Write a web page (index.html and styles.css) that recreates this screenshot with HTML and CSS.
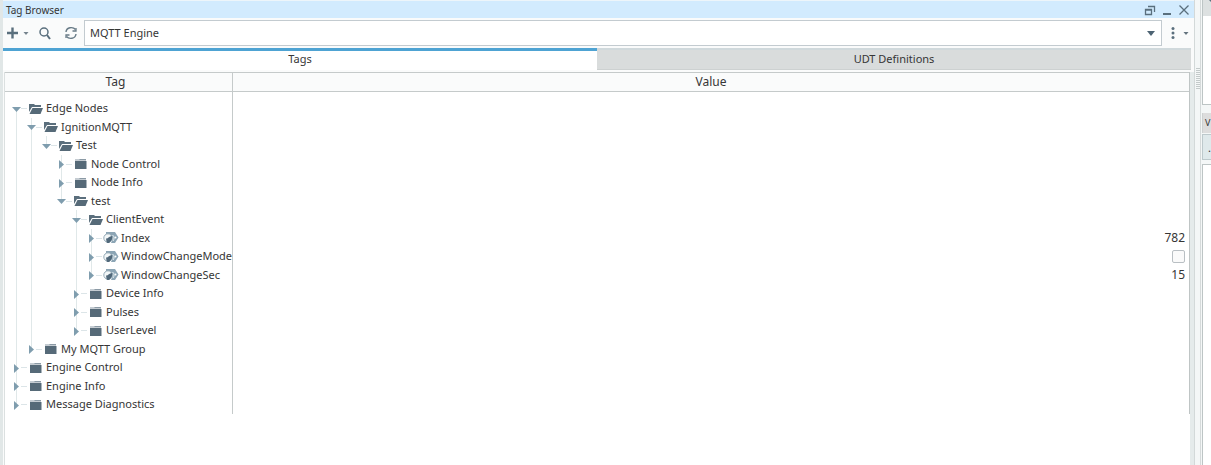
FILE: index.html
```html
<!DOCTYPE html>
<html lang="en">
<head>
<meta charset="utf-8">
<title>Tag Browser</title>
<link rel="stylesheet" href="styles.css">
</head>
<body>
<svg class="defs" aria-hidden="true">
  <symbol id="open" viewBox="0 0 16 12"><path d="M1 9V1h5l1 1h6v2H4L1 9z" fill="#5b6f7d"/><path d="M4.500 5H15l-2.500 6H1.500z" fill="#566a78"/></symbol>
  <symbol id="closed" viewBox="0 0 16 12"><path d="M2 2.500V1.500h4L7 1h6v1.500z" fill="#8b9aa5"/><path d="M2 3h11.500v8H2z" fill="#566a78"/></symbol>
  <symbol id="tag" viewBox="0 0 16 12"><path d="M3 0h9l3.500 5.500L12 11H8l2-5-3-3H3z" fill="#8ca5b5"/><path d="M9.500 3c2 1.500 2 4 .5 6" fill="none" stroke="#e9f1f4"/><circle cx="12.500" cy="5.500" r="1" fill="#fff"/><circle cx="5" cy="6" r="4.200" fill="#f3f7f8" stroke="#93a9b6"/><path d="M3 6.500C5 7 6 4 9 4c.8 2 0 4-1.500 5.500C6 12 3 11 3.500 9.500z" fill="#50687a"/></symbol>
  <symbol id="down" viewBox="0 0 10 10"><path d="M1 3h9L5.500 8z" fill="#7f9dae"/></symbol>
  <symbol id="right" viewBox="0 0 10 10"><path d="M3 1v9l5-4.500z" fill="#7f9dae"/></symbol>
</svg>
<div class="workspace">
  <main class="browser">
    <header class="titlebar">
      <h1>Tag Browser</h1>
      <button aria-label="Float"><svg width="12" height="12"><path d="M1.500 5.500h6v5h-6zM1 6h7M4 2.500h6.500V8" fill="none" stroke="#5a6f7d" stroke-width="1.300"/></svg></button>
      <button aria-label="Minimize"><svg width="12" height="12"><path d="M2 10h8" stroke="#5a6f7d" stroke-width="2"/></svg></button>
      <button aria-label="Close"><svg width="12" height="12"><path d="M1.500 1.500l9 9m0-9l-9 9" stroke="#5a6f7d" stroke-width="1.300"/></svg></button>
    </header>
    <div class="toolbar">
      <button class="add" aria-label="Add"><svg width="24" height="14"><path d="M1 7h11M6.500 1.500v11" stroke="#5a6f7d" stroke-width="2.400"/><path d="M17.500 6h5L20 9z" fill="#75838d"/></svg></button>
      <button class="find" aria-label="Search"><svg width="14" height="14"><circle cx="6" cy="6" r="4" fill="none" stroke="#5a6f7d" stroke-width="1.500"/><path d="M9 9l3 4" stroke="#5a6f7d" stroke-width="2"/></svg></button>
      <button class="refresh" aria-label="Refresh"><svg width="14" height="14"><path d="M2 6c.5-5 7-5.500 9.500-2.500M12 8c-.5 5-7 5.500-9.500 2.500" fill="none" stroke="#687b87" stroke-width="1.400"/><path d="M12 2v3H8.500M2 12V9h3.500" fill="none" stroke="#687b87" stroke-width="1.300"/></svg></button>
      <div class="provider">
        <select aria-label="Tag provider"><option>MQTT Engine</option></select>
        <svg width="10" height="8"><path d="M1 2h8L5 7z" fill="#4d6373"/></svg>
      </div>
      <button class="more" aria-label="More"><svg width="20" height="14"><g fill="#5a6f7d"><circle cx="3" cy="2.500" r="1.500"/><circle cx="3" cy="7" r="1.500"/><circle cx="3" cy="11.500" r="1.500"/></g><path d="M13.500 6h5L16 9z" fill="#63737e"/></svg></button>
    </div>
    <div class="tabs" role="tablist">
      <button class="tab active" role="tab" aria-selected="true">Tags</button>
      <button class="tab" role="tab" aria-selected="false">UDT Definitions</button>
    </div>
    <div class="content">
      <table>
        <thead><tr><th class="tagcol">Tag</th><th>Value</th></tr></thead>
        <tbody>
          <tr class="gap"><td></td><td></td></tr>
          <tr><td><div class="node"><button class="from" aria-label="Collapse"><svg><use href="#down"/></svg></button><svg class="icon"><use href="#open"/></svg>Edge Nodes</div></td><td></td></tr>
          <tr><td><div class="node"><i class="line"></i><button class="line" aria-label="Collapse"><svg><use href="#down"/></svg></button><svg class="icon"><use href="#open"/></svg>IgnitionMQTT</div></td><td></td></tr>
          <tr><td><div class="node"><i class="line"></i><i class="line"></i><button class="end" aria-label="Collapse"><svg><use href="#down"/></svg></button><svg class="icon"><use href="#open"/></svg>Test</div></td><td></td></tr>
          <tr><td><div class="node"><i class="line"></i><i class="line"></i><i></i><button class="line" aria-label="Expand"><svg><use href="#right"/></svg></button><svg class="icon"><use href="#closed"/></svg>Node Control</div></td><td></td></tr>
          <tr><td><div class="node"><i class="line"></i><i class="line"></i><i></i><button class="line" aria-label="Expand"><svg><use href="#right"/></svg></button><svg class="icon"><use href="#closed"/></svg>Node Info</div></td><td></td></tr>
          <tr><td><div class="node"><i class="line"></i><i class="line"></i><i></i><button class="end" aria-label="Collapse"><svg><use href="#down"/></svg></button><svg class="icon"><use href="#open"/></svg>test</div></td><td></td></tr>
          <tr><td><div class="node"><i class="line"></i><i class="line"></i><i></i><i></i><button class="line" aria-label="Collapse"><svg><use href="#down"/></svg></button><svg class="icon"><use href="#open"/></svg>ClientEvent</div></td><td></td></tr>
          <tr><td><div class="node"><i class="line"></i><i class="line"></i><i></i><i></i><i class="line"></i><button class="line" aria-label="Expand"><svg><use href="#right"/></svg></button><svg class="icon"><use href="#tag"/></svg>Index</div></td><td>782</td></tr>
          <tr><td><div class="node"><i class="line"></i><i class="line"></i><i></i><i></i><i class="line"></i><button class="line" aria-label="Expand"><svg><use href="#right"/></svg></button><svg class="icon"><use href="#tag"/></svg><label for="mode">WindowChangeMode</label></div></td><td><input type="checkbox" id="mode"></td></tr>
          <tr><td><div class="node"><i class="line"></i><i class="line"></i><i></i><i></i><i class="line"></i><button class="end" aria-label="Expand"><svg><use href="#right"/></svg></button><svg class="icon"><use href="#tag"/></svg>WindowChangeSec</div></td><td>15</td></tr>
          <tr><td><div class="node"><i class="line"></i><i class="line"></i><i></i><i></i><button class="line" aria-label="Expand"><svg><use href="#right"/></svg></button><svg class="icon"><use href="#closed"/></svg>Device Info</div></td><td></td></tr>
          <tr><td><div class="node"><i class="line"></i><i class="line"></i><i></i><i></i><button class="line" aria-label="Expand"><svg><use href="#right"/></svg></button><svg class="icon"><use href="#closed"/></svg>Pulses</div></td><td></td></tr>
          <tr><td><div class="node"><i class="line"></i><i class="line"></i><i></i><i></i><button class="end" aria-label="Expand"><svg><use href="#right"/></svg></button><svg class="icon"><use href="#closed"/></svg>UserLevel</div></td><td></td></tr>
          <tr><td><div class="node"><i class="line"></i><button class="end" aria-label="Expand"><svg><use href="#right"/></svg></button><svg class="icon"><use href="#closed"/></svg>My MQTT Group</div></td><td></td></tr>
          <tr><td><div class="node"><button class="line" aria-label="Expand"><svg><use href="#right"/></svg></button><svg class="icon"><use href="#closed"/></svg>Engine Control</div></td><td></td></tr>
          <tr><td><div class="node"><button class="line" aria-label="Expand"><svg><use href="#right"/></svg></button><svg class="icon"><use href="#closed"/></svg>Engine Info</div></td><td></td></tr>
          <tr><td><div class="node"><button class="end" aria-label="Expand"><svg><use href="#right"/></svg></button><svg class="icon"><use href="#closed"/></svg>Message Diagnostics</div></td><td></td></tr>
        </tbody>
      </table>
    </div>
  </main>
  <div class="splitter"><span class="grip"></span></div>
  <aside class="side">
    <section class="top"><div class="strip"><svg width="8" height="6"><path d="M0 0h8L4 4z" fill="#5a6f7d"/></svg></div></section>
    <h2>V</h2>
    <div class="sidetool">.</div>
    <section class="bottom"></section>
  </aside>
</div>
</body>
</html>
```

FILE: styles.css
```css
* { box-sizing: border-box; }

body {
  margin: 0;
  font: 11px/18px "Noto Sans", sans-serif;
  color: #363636;
  background: #f4f7f7;
  overflow: hidden;
}

button {
  display: flex;
  align-items: center;
  justify-content: center;
  padding: 0;
  border: 0;
  background: none;
  font: inherit;
  color: inherit;
}

.defs { display: none; }
.workspace { display: flex; height: 100vh; }

.browser {
  flex: 1;
  min-width: 0;
  display: flex;
  flex-direction: column;
  border-left: 3px solid #e1e7e7;
  border-right: 1px solid #d3d9d9;
  background: #fafbfb;
}

.titlebar {
  display: flex;
  align-items: center;
  gap: 5px;
  height: 18px;
  padding: 0 4px 0 3px;
  border-top: 1px solid #edf5fa;
  background: #d2ebfe;
}
.titlebar h1 { flex: 1; margin: 0; font-size: 10px; line-height: 16px; font-weight: 400; }

.toolbar {
  display: flex;
  align-items: center;
  height: 30px;
  padding: 2px 4px 2px 3px;
}
.find { margin-left: 8px; }
.refresh { margin: 0 6px 0 12px; }
.more { margin-left: 8px; }

.provider { flex: 1; display: grid; align-items: center; height: 26px; }
.provider select {
  grid-area: 1 / 1;
  width: 100%;
  height: 100%;
  padding: 0 5px;
  appearance: none;
  border: 1px solid #c3cbd0;
  border-radius: 0;
  background: #fff;
  font: inherit;
  color: inherit;
}
.provider svg {
  grid-area: 1 / 1;
  justify-self: end;
  margin-right: 6px;
  pointer-events: none;
}

.tabs { display: flex; height: 24px; padding: 0 3px 2px 0; }
.tab {
  flex: 1;
  padding-bottom: 2px;
  border-top: 2px solid #d0d9dc;
  border-bottom: 1px solid #cdd1d1;
  background: #d9dcdc;
}
.tab.active { padding-bottom: 4px; border-top: 3px solid #4ea3d3; border-bottom: 0; background: #fff; }

.content {
  flex: 1;
  margin-left: 1px;
  border-left: 1px solid #dbe0e0;
  border-right: 4px solid #e5ebeb;
  background: #fff;
}

table {
  width: 100%;
  table-layout: fixed;
  border-collapse: separate;
  border-spacing: 0;
  border-right: 1px solid #bfc5c5;
}
th {
  height: 20px;
  padding: 0;
  border: solid #c5caca;
  border-width: 1px 0;
  background: #fafbfb;
  font-size: 12px;
  font-weight: 400;
  line-height: 16px;
}
th.tagcol { width: 228px; padding-right: 6px; }
th:first-child, td:first-child { border-right: 1px solid #c5caca; }
tbody tr { height: 19px; }
tbody tr:nth-child(odd) { height: 18px; }
tbody tr.gap { height: 7px; }
td { height: inherit; padding: 0; line-height: 18px; }
td:last-child { padding-right: 4px; font-size: 12px; text-align: right; }

.node { display: flex; height: 100%; padding-left: 4px; white-space: nowrap; }
.node i, .node button { flex: none; width: 15px; }
.node button { width: 18px; justify-content: flex-start; padding-left: 2px; }
.node button svg { width: 10px; height: 10px; }
.node .line, .node .end, .node .from {
  background: linear-gradient(#e0e8e9, #e0e8e9) 7px 0 / 1px 100% no-repeat;
}
.node .end { background-size: 1px 50%; }
.node .from { background-position: 7px 100%; background-size: 1px 50%; }
.node button::after { content: ""; width: 6px; height: 1px; background: #dce5e8; }
.icon { flex: none; align-self: center; width: 16px; height: 12px; margin: 0 2px 0 1px; }

input[type="checkbox"] {
  display: block;
  appearance: none;
  width: 13px;
  height: 13px;
  margin: 0 0 0 auto;
  border: 1px solid #b9bfc3;
  border-radius: 2px;
  background: #fafafa;
}

.splitter {
  display: flex;
  width: 6px;
  padding: 68px 0 0 1px;
  border-right: 1px solid #d5dada;
}
.grip {
  width: 4px;
  height: 22px;
  background: repeating-linear-gradient(#c3caca 0 1px, #f4f7f7 1px 2px);
}

.side { display: flex; flex-direction: column; width: 10px; padding-left: 1px; overflow: hidden; }
.side section { border-left: 1px solid #bdc5c5; background: #fff; }
.side .top { height: 105px; border-bottom: 1px solid #bdc5c5; }
.strip { display: flex; height: 16px; padding-left: 6px; background: #dde1e1; }
.side h2 {
  height: 20px;
  margin: 8px 0 1px;
  padding-left: 2px;
  border-left: 1px solid #cdd1d1;
  background: #dddddd;
  font-size: 9px;
  line-height: 20px;
  font-weight: 400;
}
.sidetool { height: 26px; padding: 4px 0 0 5px; border: 1px solid #bdc9cc; border-right: 0; background: #dfe9eb; }
.side .bottom { flex: 1; margin-top: 4px; border-top: 1px solid #bdc5c5; }
```
